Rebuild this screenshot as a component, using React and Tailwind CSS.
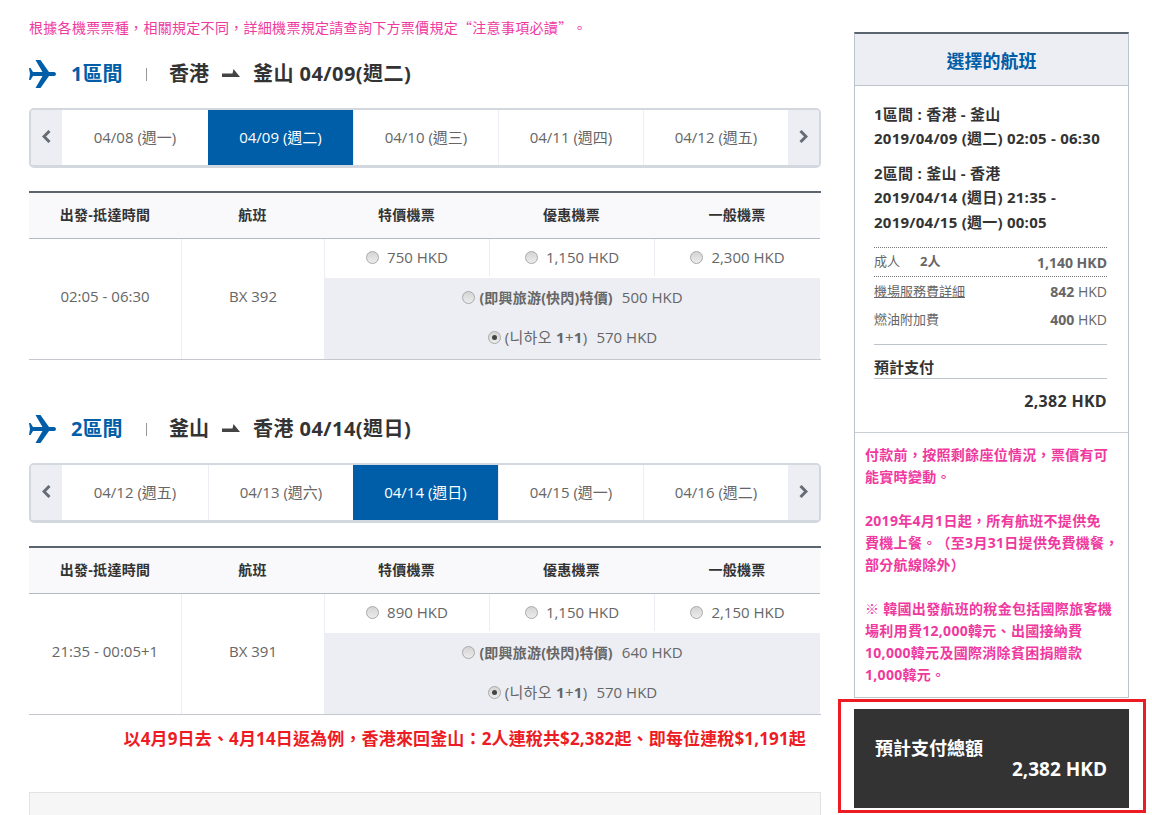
const sections = [
  {
    label: '1區間',
    from: '香港',
    to: '釜山',
    date: '04/09(週二)',
    tabs: ['04/08 (週一)', '04/09 (週二)', '04/10 (週三)', '04/11 (週四)', '04/12 (週五)'],
    active: 1,
    time: '02:05 - 06:30',
    flight: 'BX 392',
    prices: ['750', '1,150', '2,300'],
    flash: '500',
    promo: '570',
  },
  {
    label: '2區間',
    from: '釜山',
    to: '香港',
    date: '04/14(週日)',
    tabs: ['04/12 (週五)', '04/13 (週六)', '04/14 (週日)', '04/15 (週一)', '04/16 (週二)'],
    active: 2,
    time: '21:35 - 00:05+1',
    flight: 'BX 391',
    prices: ['890', '1,150', '2,150'],
    flash: '640',
    promo: '570',
  },
];

function Radio({ checked }) {
  return (
    <span className="inline-flex w-[13px] h-[13px] shrink-0 items-center justify-center rounded-full border border-[#a9a9a9] bg-gradient-to-b from-[#d4d4d4] to-[#ececec]">
      {checked && <span className="w-[5px] h-[5px] rounded-full bg-[#444]" />}
    </span>
  );
}

function PlaneIcon() {
  return (
    <svg width="27" height="28" viewBox="0 0 27 28" className="shrink-0" fill="#005ea8">
      <path d="M4 12H13.5L6.5 0H11.5L20 12H25C27.6 12 27.6 16 25 16H20L11.5 28H6.5L13.5 16H4L1.5 20H0L1 14L0 8H1.5Z" />
    </svg>
  );
}

function Harpoon() {
  return (
    <svg width="18" height="8" viewBox="0 0 18 8" className="shrink-0 -mt-[2px]">
      <path d="M0 4.5H10.5L11.5 0L18 8H0Z" fill="#444" />
    </svg>
  );
}

function Arrow({ right }) {
  return (
    <svg width="9" height="13" viewBox="0 0 9 13" className="-mt-[3px]" fill="none" stroke="#666c75" strokeWidth="3">
      <polyline points={right ? '1.5,1 7,6.5 1.5,12' : '7.5,1 2,6.5 7.5,12'} />
    </svg>
  );
}

function FlightSection({ data }) {
  return (
    <section>
      <div className="flex items-center h-[30px]">
        <PlaneIcon />
        <span className="ml-[15px] text-[20px] font-bold text-[#005ea8] w-[75px]">{data.label}</span>
        <span className="w-px h-[13px] bg-[#999]" />
        <span className="ml-[22px] text-[20px] font-bold text-[#333]">{data.from}</span>
        <span className="ml-[13px] mr-[13px] flex"><Harpoon /></span>
        <span className="text-[20px] tracking-[0.45px] font-bold text-[#333]">{data.to} {data.date}</span>
      </div>

      <div className="mt-[19px] flex h-[60px] rounded-[5px] border-x-2 border-t-2 border-b-[3px] border-[#d3d8df] overflow-hidden">
        <div className="w-[31px] shrink-0 bg-[#eceef3] flex items-center justify-center">
          <Arrow />
        </div>
        <div className="flex-1 grid grid-cols-[146px_145px_145px_145px_145px]">
          {data.tabs.map((tab, i) => (
            <div
              key={tab}
              className={`flex items-center justify-center text-[15px] ${
                i === data.active ? 'bg-[#005ea8] text-white' : 'bg-white text-[#666]'
              } ${i > 0 && i !== data.active ? 'border-l border-[#eceef3]' : ''}`}
            >
              {tab}
            </div>
          ))}
        </div>
        <div className="w-[31px] shrink-0 bg-[#eceef3] flex items-center justify-center">
          <Arrow right />
        </div>
      </div>

      <div className="mt-[23px] border-t-2 border-[#5b6570]">
        <div className="grid grid-cols-[152px_143px_165px_165px_1fr] h-[46px] pb-[2px] bg-[#f9f9fc] border-b border-[#b2bac4] text-[14px] tracking-[0.3px] font-bold text-[#333] mr-[1px]">
          {['出發-抵達時間', '航班', '特價機票', '優惠機票', '一般機票'].map((h) => (
            <div key={h} className="flex items-center justify-center">{h}</div>
          ))}
        </div>
        <div className="flex border-b border-[#c4c8ce] h-[121px]">
          <div className="w-[153px] pb-[5px] border-r border-[#eceef3] flex items-center justify-center text-[15px] text-[#666]">{data.time}</div>
          <div className="w-[143px] pb-[5px] border-r border-[#eceef3] flex items-center justify-center text-[15px] text-[#666]">{data.flight}</div>
          <div className="flex-1 flex flex-col mr-[1px] text-[15px] text-[#666]">
            <div className="h-[39px] pb-[2px] grid grid-cols-3">
              {data.prices.map((p, i) => (
                <div key={i} className={`flex items-center justify-center gap-[8px] ${i < 2 ? 'border-r border-[#eceef3]' : ''}`}>
                  <Radio />
                  <span>{p} HKD</span>
                </div>
              ))}
            </div>
            <div className="flex-1 bg-[#eceef3] flex flex-col">
              <div className="h-[40px] pb-[2px] flex items-center justify-center gap-[4px]">
                <Radio />
                <span className="text-[14px] tracking-[0.2px] font-bold">(即興旅游(快閃)特價)</span>
                <span className="ml-[5px]">{data.flash} HKD</span>
              </div>
              <div className="flex-1 pb-[2px] flex items-center justify-center gap-[4px]">
                <Radio checked />
                <span className="tracking-[0.3px]">(니하오 <b>1</b>+<b>1</b>)</span>
                <span className="ml-[5px]">{data.promo} HKD</span>
              </div>
            </div>
          </div>
        </div>
      </div>
    </section>
  );
}

function Row({ left, right, className = '' }) {
  return (
    <div className={`flex justify-between items-center text-[13px] text-[#666] ${className}`}>
      <span>{left}</span>
      <span className="text-[14px]">{right}</span>
    </div>
  );
}

export default function App() {
  return (
    <div className="h-[815px] overflow-hidden bg-white flex [text-spacing-trim:space-all] font-['Open_Sans','Noto_Sans_CJK_TC',sans-serif]">
      <main className="ml-[29px] w-[792px] shrink-0">
        <p className="mt-[18px] h-[18px] text-[14px] tracking-[0.3px] leading-[18px] whitespace-nowrap text-[#f0399f]">
          根據各機票票種，相關規定不同，詳細機票規定請查詢下方票價規定<span className="font-['Noto_Sans_CJK_TC']">“</span>注意事項必讀<span className="font-['Noto_Sans_CJK_TC']">”</span>。
        </p>
        <div className="mt-[23px]">
          <FlightSection data={sections[0]} />
        </div>
        <div className="mt-[54px]">
          <FlightSection data={sections[1]} />
        </div>
        <p className="mt-[12px] h-[24px] pr-[15px] text-right text-[17px] tracking-[0.15px] leading-[24px] font-bold whitespace-nowrap text-[#ed1c24]">
          以4月9日去、4月14日返為例，香港來回釜山：2人連稅共$2,382起、即每位連稅$1,191起
        </p>
        <div className="mt-[41px] h-[120px] bg-[#f6f6f6] border border-[#e2e2e2]" />
      </main>

      <aside className="ml-[17px] w-[308px] shrink-0">
        <div className="mt-[32px] ml-[16px] w-[275px] border-x border-[#bcc4ce] border-t-2 border-t-[#5b6570] border-b border-b-[#bcc4ce]">
          <h2 className="h-[52px] pt-[3px] flex items-center justify-center bg-[#eceef3] border-b border-[#bcc4ce] text-[18px] font-bold text-[#005ea8]">
            選擇的航班
          </h2>
          <div className="pl-[19px] pr-[21px] pt-[16px] pb-[21px] border-b border-[#c8ced6]">
            <div className="text-[15px] tracking-[0.25px] leading-[24px] font-bold text-[#333] whitespace-nowrap">
              <div>1區間 : 香港 - 釜山</div>
              <div>2019/04/09 (週二) 02:05 - 06:30</div>
              <div className="mt-[11px]">2區間 : 釜山 - 香港</div>
              <div className="leading-[25px]">2019/04/14 (週日) 21:35 -</div>
              <div className="leading-[25px]">2019/04/15 (週一) 00:05</div>
            </div>
            <div className="mt-[12px] border-y border-dotted border-[#777] h-[30px] flex items-center justify-between text-[13px] text-[#666]">
              <span>成人<b className="ml-[20px]">2人</b></span>
              <b className="text-[14px]">1,140 HKD</b>
            </div>
            <Row className="h-[29px]" left={<span className="underline">機場服務費詳細</span>} right={<><b>842</b> HKD</>} />
            <Row className="h-[27px]" left="燃油附加費" right={<><b>400</b> HKD</>} />
            <div className="mt-[11px] border-y border-[#bcc4ce] pt-[13px] h-[35px] text-[15px] leading-[18px] font-bold text-[#333]">
              預計支付
            </div>
            <div className="mt-[12px] text-right text-[16px] tracking-[0.3px] leading-[20px] font-bold text-[#333]">2,382 HKD</div>
          </div>
          <div className="px-[10px] pt-[11px] pb-[11px] text-[14px] tracking-[0.3px] leading-[22px] font-bold whitespace-nowrap text-[#f0399f]">
            <p>付款前，按照剩餘座位情況，票價有可<br />能實時變動。</p>
            <p className="mt-[22px]">2019年4月1日起，所有航班不提供免<br />費機上餐。（至3月31日提供免費機餐，<br />部分航線除外）</p>
            <p className="mt-[22px]">※ 韓國出發航班的稅金包括國際旅客機<br />場利用費12,000韓元、出國接納費<br />10,000韓元及國際消除貧困捐贈款<br />1,000韓元。</p>
          </div>
        </div>
        <div className="mt-[1px] h-[114px] border-[3px] border-[#ed1c24] pt-[7px] pl-[13px] pr-[14px] pb-[2px]">
          <div className="h-[99px] bg-[#333] text-white pl-[21px] pr-[22px] pt-[27px]">
            <div className="text-[18px] leading-[24px] font-bold">預計支付總額</div>
            <div className="text-right text-[19px] leading-[24px] font-bold -mt-[3px]">2,382 HKD</div>
          </div>
        </div>
      </aside>
    </div>
  );
}
